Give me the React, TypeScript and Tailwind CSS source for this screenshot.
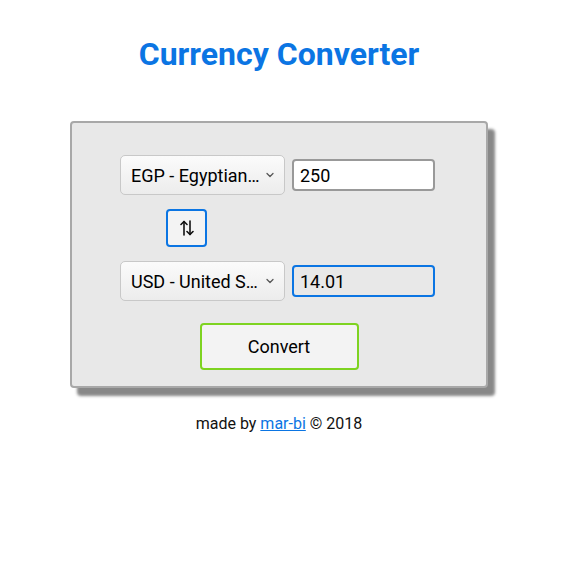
import { ChevronDown } from 'lucide-react'

function CurrencySelect({ label }: { label: string }) {
  return (
    <div className="relative w-[165px] h-10 rounded-[5px] border border-[#c8c8c8] bg-gradient-to-b from-[#fbfbfb] to-[#ececec] flex items-center pl-[10px] pr-[21px]">
      <span className="truncate text-[18px] text-black">{label}</span>
      <ChevronDown size={12} strokeWidth={2.5} className="absolute right-[8px] top-[13px] text-[#555]" />
    </div>
  )
}

function SwapIcon() {
  return (
    <svg width="14" height="16" viewBox="0 0 14 16" fill="none" stroke="#111" strokeWidth="1.6" strokeLinecap="round" strokeLinejoin="round">
      <path d="M4 15V1.5" />
      <path d="M1 4.5L4 1.5L7 4.5" />
      <path d="M10 1V14.5" />
      <path d="M7 11.5L10 14.5L13 11.5" />
    </svg>
  )
}

export default function App() {
  return (
    <div className="min-h-[565px] bg-white flex flex-col items-center pr-[6px] font-['Roboto',sans-serif]">
      <h1 className="mt-[34px] text-[32px] font-bold text-[#0b75e3] leading-[40px]">Currency Converter</h1>

      <div className="mt-[47px] w-[418px] h-[267px] bg-[#e8e8e8] border-2 border-[#a8a8a8] rounded-[4px] shadow-[7px_8px_3px_#888888] flex flex-col items-center pt-[32px]">
        <div className="flex items-center gap-[7px] -ml-[3px]">
          <CurrencySelect label="EGP - Egyptian Pound" />
          <input readOnly value="250" className="w-[143px] h-8 bg-white border-2 border-[#999] rounded-[4px] px-[6px] text-[18px] text-black outline-none" />
        </div>

        <div className="w-[315px] -ml-[3px] mt-[14px]">
          <button className="ml-[46px] w-[41px] h-[38px] border-2 border-[#0b75e3] rounded-[4px] bg-[#f3f3f3] flex items-center justify-center">
            <SwapIcon />
          </button>
        </div>

        <div className="flex items-center gap-[7px] -ml-[3px] mt-[14px]">
          <CurrencySelect label="USD - United States Dollar" />
          <input readOnly value="14.01" className="w-[143px] h-8 bg-transparent border-2 border-[#0b75e3] rounded-[4px] px-[6px] text-[18px] text-black outline-none" />
        </div>

        <button className="mt-[22px] w-[159px] h-[47px] bg-[#f3f3f3] border-2 border-[#7ed321] rounded-[4px] text-[18px] text-black">Convert</button>
      </div>

      <p className="mt-[24px] text-[16px] text-[#111]">
        made by <a href="#" className="text-[#0b75e3] underline">mar-bi</a> © 2018
      </p>
    </div>
  )
}
